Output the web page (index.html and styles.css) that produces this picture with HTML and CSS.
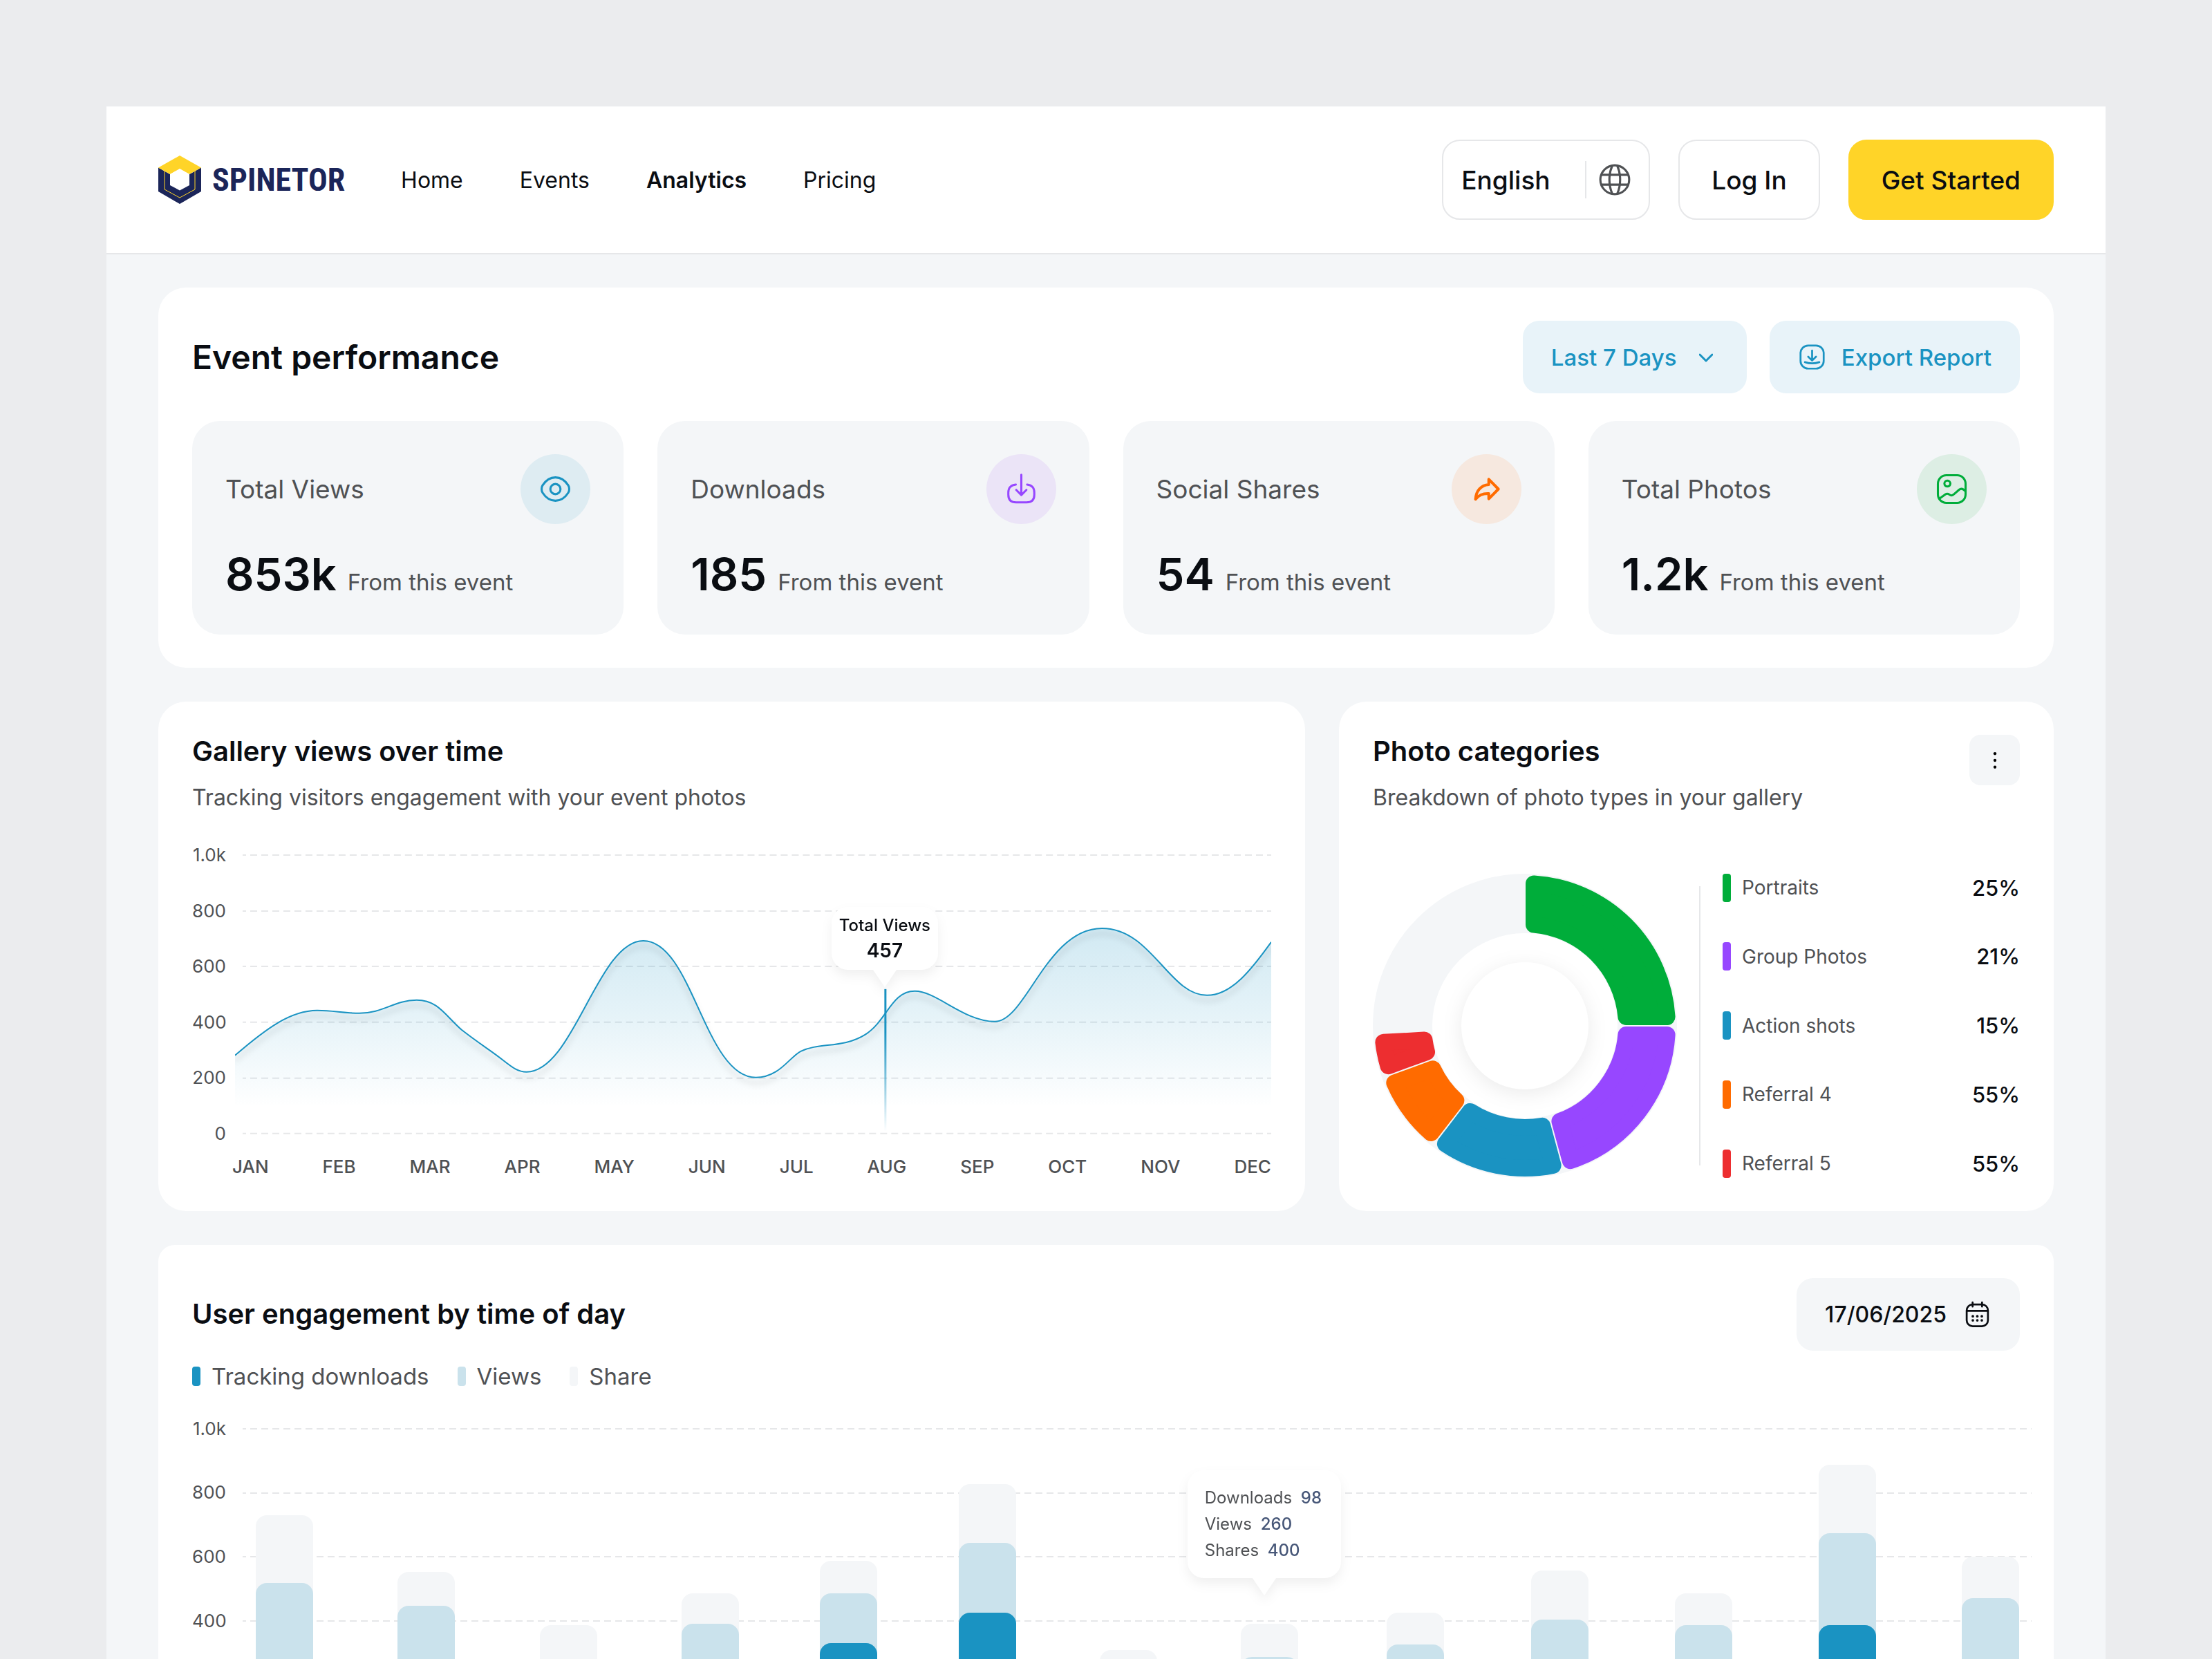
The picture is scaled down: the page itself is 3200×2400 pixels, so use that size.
FILE: index.html
```html
<!DOCTYPE html>
<html lang="en">
<head>
    <meta charset="UTF-8">
    <meta name="viewport" content="width=device-width, initial-scale=1.0">
    <title>Spinetor - Analytics</title>
    <link rel="stylesheet" href="styles.css">
</head>
<body>
    <div class="page">
        <header class="header">
            <a class="logo" href="#">
                <svg class="logo-mark" viewBox="0 0 62 70">
                    <path d="M0 17.5 31 35 62 17.5V52L31 70 0 52Z" fill="#1b2559"/>
                    <path d="M9 22V49L31 61 53 49V22" fill="none" stroke="#ffd428"/>
                    <path d="M31 0 62 17.5 45 27 31 19 17 27 0 17.5Z" fill="#ffd428"/>
                    <path d="M31 19.500 45 27V43L31 50.500 17 43V27Z" fill="#fff"/>
                </svg>
                <span class="logo-text">SPINETOR</span>
            </a>
            <nav class="nav">
                <a href="#">Home</a>
                <a href="#">Events</a>
                <a class="active" href="#">Analytics</a>
                <a href="#">Pricing</a>
            </nav>
            <div class="header-actions">
                <label class="language">
                    <select aria-label="Language">
                        <option>English</option>
                    </select>
                    <svg class="icon-globe" viewBox="0 0 24 24">
                        <circle cx="12" cy="12" r="10"/>
                        <path d="M10.300 2.200C7.600 8 7.600 16 10.300 21.800M13.700 2.200C16.400 8 16.400 16 13.700 21.800M2.600 8.600H21.400M2.600 15.400H21.400"/>
                    </svg>
                </label>
                <button class="btn">Log In</button>
                <button class="btn btn-primary">Get Started</button>
            </div>
        </header>

        <main class="content">
            <section class="card">
                <div class="card-head">
                    <h1>Event performance</h1>
                    <div class="tools">
                        <label class="period">
                            <select aria-label="Period">
                                <option>Last 7 Days</option>
                            </select>
                            <svg class="icon-chevron" viewBox="0 0 20 20"><path d="M1 6 10 15 19 6"/></svg>
                        </label>
                        <button class="btn-soft">
                            <svg class="icon-small" viewBox="0 0 24 24">
                                <rect x="2.200" y="2.200" width="19.600" height="19.600" rx="6.500"/>
                                <path d="M12 6.500V14.800M8.700 11.700 12 15 15.300 11.700M5.900 16.300C9.800 17.700 14.200 17.700 18.100 16.300"/>
                            </svg>
                            Export Report
                        </button>
                    </div>
                </div>
                <div class="stats">
                    <div class="stat">
                        <div class="stat-head">
                            <h2>Total Views</h2>
                            <span class="badge badge-blue">
                                <svg viewBox="0 0 24 24">
                                    <circle cx="12" cy="12" r="3.600"/>
                                    <path d="M12 20.270c3.530 0 6.820-2.080 9.110-5.680.9-1.410.9-3.780 0-5.190-2.290-3.600-5.580-5.680-9.110-5.680-3.530 0-6.820 2.080-9.110 5.680-.9 1.410-.9 3.780 0 5.190 2.290 3.600 5.580 5.680 9.110 5.680Z"/>
                                </svg>
                            </span>
                        </div>
                        <p class="stat-value"><b>853k</b> <span>From this event</span></p>
                    </div>
                    <div class="stat">
                        <div class="stat-head">
                            <h2>Downloads</h2>
                            <span class="badge badge-purple">
                                <svg viewBox="0 0 24 24">
                                    <path d="M8.100 8.800C4.500 9.200 2.800 11 2.800 14.500V16C2.800 19.700 4.700 21.400 8.300 21.400H15.700C19.300 21.400 21.200 19.700 21.200 16V14.500C21.200 11 19.500 9.200 16.100 8.800M12 1.800V16M8.400 12.600 12 16.200 15.600 12.600"/>
                                </svg>
                            </span>
                        </div>
                        <p class="stat-value"><b>185</b> <span>From this event</span></p>
                    </div>
                    <div class="stat">
                        <div class="stat-head">
                            <h2>Social Shares</h2>
                            <span class="badge badge-orange">
                                <svg viewBox="0 0 24 24">
                                    <path d="M13.600 5.100 20.400 12 13.600 18.900V15.200C9.500 15 6.500 16.200 4.200 19.200 4.600 13.300 8 9.200 13.600 8.800Z"/>
                                </svg>
                            </span>
                        </div>
                        <p class="stat-value"><b>54</b> <span>From this event</span></p>
                    </div>
                    <div class="stat">
                        <div class="stat-head">
                            <h2>Total Photos</h2>
                            <span class="badge badge-green">
                                <svg viewBox="0 0 24 24">
                                    <rect x="2.200" y="2.200" width="19.600" height="19.600" rx="6"/>
                                    <circle cx="8.900" cy="8.100" r="2.100"/>
                                    <path d="M3.500 18.600 7.600 15.700C9.200 14.600 9.900 15.700 11 16.300 12 16.900 12.800 16.300 13.600 15.600L17.200 12.500C18.800 11.200 20.200 11.900 21.600 13.500"/>
                                </svg>
                            </span>
                        </div>
                        <p class="stat-value"><b>1.2k</b> <span>From this event</span></p>
                    </div>
                </div>
            </section>

            <div class="row">
                <section class="card">
                    <h2 class="card-title">Gallery views over time</h2>
                    <p class="card-sub">Tracking visitors engagement with your event photos</p>
                    <div class="plot plot-line">
                        <div class="y-axis">
                            <span>1.0k</span><span>800</span><span>600</span><span>400</span><span>200</span><span>0</span>
                        </div>
                        <div class="canvas">
                            <svg viewBox="0 -16 1500 435">
                                <defs>
                                    <linearGradient id="area" gradientUnits="userSpaceOnUse" x1="0" y1="106" x2="0" y2="365">
                                        <stop offset="0" stop-color="#1a93c2" stop-opacity=".2"/>
                                        <stop offset=".5" stop-color="#1a93c2" stop-opacity=".11"/>
                                        <stop offset="1" stop-color="#1a93c2" stop-opacity="0"/>
                                    </linearGradient>
                                    <linearGradient id="marker" x1="0" y1="0" x2="0" y2="1">
                                        <stop offset=".3" stop-color="#1a93c2"/>
                                        <stop offset="1" stop-color="#1a93c2" stop-opacity="0"/>
                                    </linearGradient>
                                </defs>
                                <path class="grid-line" d="M11 0H1500M11 81H1500M11 161H1500M11 242H1500M11 323H1500M11 403H1500"/>
                                <path fill="url(#area)" d="M0 290C44 252 80 225 119 225C143 225 156 229 180 229C215 229 230 210 263 210C294 210 304 232 328 253C352 272 372 284 388 297C402 308 410 314 422 314C490 314 525 124 591 124C662 124 680 322 754 322C788 322 803 292 819 284C846 271 880 280 912 260C944 240 950 197 984 197C1016 197 1055 241 1100 241C1145 241 1175 106 1255 106C1327 106 1352 203 1407 203C1443 203 1472 165 1500 126V365H0Z"/>
                                <path class="curve" d="M0 290C44 252 80 225 119 225C143 225 156 229 180 229C215 229 230 210 263 210C294 210 304 232 328 253C352 272 372 284 388 297C402 308 410 314 422 314C490 314 525 124 591 124C662 124 680 322 754 322C788 322 803 292 819 284C846 271 880 280 912 260C944 240 950 197 984 197C1016 197 1055 241 1100 241C1145 241 1175 106 1255 106C1327 106 1352 203 1407 203C1443 203 1472 165 1500 126"/>
                                <rect x="940" y="194" width="3" height="206" fill="url(#marker)"/>
                            </svg>
                            <div class="tooltip tooltip-views">
                                <span>Total Views</span>
                                <b>457</b>
                            </div>
                        </div>
                    </div>
                    <div class="months">
                        <span>JAN</span><span>FEB</span><span>MAR</span><span>APR</span><span>MAY</span><span>JUN</span>
                        <span>JUL</span><span>AUG</span><span>SEP</span><span>OCT</span><span>NOV</span><span>DEC</span>
                    </div>
                </section>

                <section class="card card-photos">
                    <div class="photos-head">
                        <div>
                            <h2 class="card-title">Photo categories</h2>
                            <p class="card-sub">Breakdown of photo types in your gallery</p>
                        </div>
                        <button class="btn-more" aria-label="More">
                            <svg viewBox="0 0 24 24"><circle cx="12" cy="3" r="2"/><circle cx="12" cy="12" r="2"/><circle cx="12" cy="21" r="2"/></svg>
                        </button>
                    </div>
                    <div class="photos-body">
                        <svg class="donut" viewBox="0 0 440 440">
                            <circle cx="220" cy="220" r="177" fill="none" stroke="#f4f6f8" stroke-width="86"/>
                            <circle class="donut-hole" cx="220" cy="220" r="92"/>
                            <path class="slice green" d="M233 14.400A206 206 0 0 1 425.600 207L366.400 207A147 147 0 0 0 233 73.600Z"/>
                            <path class="slice purple" d="M425.600 233A206 206 0 0 1 285.800 415.200L270.400 358.100A147 147 0 0 0 366.400 233Z"/>
                            <path class="slice blue" d="M260.600 421.900A206 206 0 0 1 104.900 390.800L140.900 343.900A147 147 0 0 0 245.300 364.800Z"/>
                            <path class="slice orange" d="M84.200 375A206 206 0 0 1 31.300 302.500L86.800 282.300A147 147 0 0 0 120.400 328.100Z"/>
                            <path class="slice red" d="M22.400 278.100A206 206 0 0 1 15.400 243.800L74.500 240.600A147 147 0 0 0 78 257.900Z"/>
                        </svg>
                        <div class="divider"></div>
                        <ul class="categories">
                            <li><i class="green"></i><span>Portraits</span><b>25%</b></li>
                            <li><i class="purple"></i><span>Group Photos</span><b>21%</b></li>
                            <li><i class="blue"></i><span>Action shots</span><b>15%</b></li>
                            <li><i class="orange"></i><span>Referral 4</span><b>55%</b></li>
                            <li><i class="red"></i><span>Referral 5</span><b>55%</b></li>
                        </ul>
                    </div>
                </section>
            </div>

            <section class="card card-engagement">
                <div class="card-head">
                    <h2 class="card-title">User engagement by time of day</h2>
                    <button class="btn-date">
                        17/06/2025
                        <svg class="icon-small" viewBox="0 0 24 24">
                            <rect x="3" y="3.600" width="18" height="18.400" rx="5"/>
                            <path d="M8 1.800V5.400M16 1.800V5.400M3.400 9H20.600"/>
                            <path class="dots" d="M8.200 13.600h.01M12 13.600h.01M15.800 13.600h.01M8.200 17h.01M12 17h.01M15.800 17h.01"/>
                        </svg>
                    </button>
                </div>
                <ul class="legend">
                    <li><i class="blue"></i>Tracking downloads</li>
                    <li><i class="light"></i>Views</li>
                    <li><i class="grey"></i>Share</li>
                </ul>
                <div class="plot plot-bars">
                    <div class="y-axis">
                        <span>1.0k</span><span>800</span><span>600</span><span>400</span>
                    </div>
                    <div class="canvas">
                        <svg viewBox="0 -16 2588 349">
                            <path class="grid-line" d="M0 0H2588M0 93H2588M0 185H2588M0 278H2588"/>
                            <g class="bar-share">
                                <rect x="19" y="125" width="83" height="338" rx="16"/>
                                <rect x="224" y="207" width="83" height="256" rx="16"/>
                                <rect x="430" y="284" width="83" height="179" rx="16"/>
                                <rect x="635" y="238" width="83" height="225" rx="16"/>
                                <rect x="835" y="191" width="83" height="272" rx="16"/>
                                <rect x="1036" y="80" width="83" height="383" rx="16"/>
                                <rect x="1240" y="320" width="83" height="143" rx="16"/>
                                <rect x="1444" y="282" width="83" height="181" rx="16"/>
                                <rect x="1655" y="266" width="83" height="197" rx="16"/>
                                <rect x="1864" y="205" width="83" height="258" rx="16"/>
                                <rect x="2072" y="238" width="83" height="225" rx="16"/>
                                <rect x="2280" y="52" width="83" height="411" rx="16"/>
                                <rect x="2487" y="185" width="83" height="278" rx="16"/>
                            </g>
                            <g class="bar-views">
                                <rect x="19" y="223" width="83" height="240" rx="16"/>
                                <rect x="224" y="256" width="83" height="207" rx="16"/>
                                <rect x="635" y="282" width="83" height="181" rx="16"/>
                                <rect x="835" y="238" width="83" height="225" rx="16"/>
                                <rect x="1036" y="165" width="83" height="298" rx="16"/>
                                <rect x="1444" y="330" width="83" height="133" rx="16"/>
                                <rect x="1655" y="312" width="83" height="151" rx="16"/>
                                <rect x="1864" y="276" width="83" height="187" rx="16"/>
                                <rect x="2072" y="284" width="83" height="179" rx="16"/>
                                <rect x="2280" y="151" width="83" height="312" rx="16"/>
                                <rect x="2487" y="245" width="83" height="218" rx="16"/>
                            </g>
                            <g class="bar-downloads">
                                <rect x="835" y="310" width="83" height="153" rx="16"/>
                                <rect x="1036" y="266" width="83" height="197" rx="16"/>
                                <rect x="2280" y="284" width="83" height="179" rx="16"/>
                            </g>
                        </svg>
                        <div class="tooltip tooltip-bars">
                            <p>Downloads <b>98</b></p>
                            <p>Views <b>260</b></p>
                            <p>Shares <b>400</b></p>
                        </div>
                    </div>
                </div>
            </section>
        </main>
    </div>
</body>
</html>
```
FILE: styles.css
```css
* {
    box-sizing: border-box;
    margin: 0;
    padding: 0;
}

body {
    height: 100vh;
    overflow: hidden;
    padding: 154px 154px 0;
    background: #ebecee;
    font-family: Inter, "Liberation Sans", sans-serif;
    font-size: 32px;
    color: #0a0d12;
}

button,
select {
    border: 0;
    background: none;
    font: inherit;
    color: inherit;
    cursor: pointer;
}

select {
    appearance: none;
    outline: 0;
}

a {
    color: inherit;
    text-decoration: none;
}

ul {
    list-style: none;
}

svg {
    display: block;
    flex: none;
}

.page {
    background: #f4f6f8;
}

/* header */
.header {
    display: flex;
    align-items: center;
    padding: 48px 75px;
    background: #fff;
    border-bottom: 2px solid #e6e7e9;
}

.logo {
    display: flex;
    align-items: center;
    gap: 16px;
    color: #1b2559;
}

.logo-mark {
    width: 62px;
    height: 70px;
}

.logo-text {
    font-family: "Liberation Sans Narrow", "Roboto Condensed", "DejaVu Sans Condensed", sans-serif;
    font-size: 46px;
    font-weight: 700;
}

.nav {
    display: flex;
    gap: 82px;
    margin-left: 81px;
}

.nav .active {
    font-weight: 600;
}

.header-actions {
    display: flex;
    gap: 41px;
    margin-left: auto;
    font-size: 37px;
    font-weight: 500;
}

.btn,
.language {
    height: 116px;
    padding: 0 46px;
    border: 2px solid #e6e7e9;
    border-radius: 26px;
}

.btn-primary {
    background: #ffd428;
    border-color: #ffd428;
}

.language {
    display: flex;
    align-items: center;
    padding: 0 24px 0 26px;
}

.language select {
    width: 181px;
    height: 54px;
    border-right: 2px solid #e6e7e9;
}

.icon-globe {
    width: 50px;
    height: 50px;
    margin-left: 16px;
    fill: none;
    stroke: #4f5154;
    stroke-width: 1.500;
}

/* cards */
.content {
    display: flex;
    flex-direction: column;
    gap: 49px;
    padding: 48px 75px 0;
}

.card {
    padding: 48px 49px;
    background: #fff;
    border-radius: 40px;
}

.card-head {
    display: flex;
    align-items: center;
    justify-content: space-between;
}

h1 {
    font-size: 48px;
    font-weight: 600;
}

.card-title {
    font-size: 40px;
    font-weight: 600;
    line-height: 48px;
}

.card-sub {
    margin-top: 23px;
    line-height: 40px;
    color: #4f5154;
}

.tools {
    display: flex;
    gap: 33px;
    font-size: 33px;
}

.period,
.btn-soft,
.btn-date {
    display: flex;
    align-items: center;
    height: 105px;
    padding: 0 41px;
    border-radius: 24px;
    background: #e8f3f9;
    color: #1a93c2;
    font-weight: 500;
}

.period {
    gap: 32px;
    padding-right: 49px;
}

.btn-soft {
    gap: 22px;
}

.btn-date {
    gap: 24px;
    background: #f4f6f8;
    color: #0a0d12;
}

.icon-chevron {
    width: 20px;
    height: 20px;
    fill: none;
    stroke: #1a93c2;
    stroke-width: 3;
    stroke-linecap: round;
    stroke-linejoin: round;
}

.icon-small {
    width: 41px;
    height: 41px;
    fill: none;
    stroke: currentColor;
    stroke-width: 1.600;
    stroke-linecap: round;
    stroke-linejoin: round;
}

.dots {
    stroke-width: 2.200;
}

/* stats */
.stats {
    display: grid;
    grid-template-columns: repeat(4, 1fr);
    gap: 49px;
    margin-top: 40px;
}

.stat {
    padding: 48px;
    background: #f4f6f8;
    border-radius: 40px;
}

.stat-head {
    display: flex;
    align-items: center;
    justify-content: space-between;
}

.stat-head h2 {
    font-size: 37px;
    font-weight: 400;
    color: #4f5154;
}

.badge {
    display: flex;
    align-items: center;
    justify-content: center;
    width: 101px;
    height: 101px;
    border-radius: 50%;
}

.badge svg {
    width: 49px;
    height: 49px;
    fill: none;
    stroke: currentColor;
    stroke-width: 1.500;
    stroke-linecap: round;
    stroke-linejoin: round;
}

.badge-blue {
    background: #deecf2;
    color: #1a93c2;
}

.badge-purple {
    background: #ebe4f7;
    color: #9747ff;
}

.badge-orange {
    background: #f6e8df;
    color: #ff6b00;
}

.badge-orange svg {
    stroke-width: 2;
}

.badge-green {
    background: #ddeee4;
    color: #00ad3a;
}

.stat-value {
    display: flex;
    align-items: baseline;
    gap: 16px;
    margin-top: 34px;
    font-size: 33px;
    line-height: 40px;
    color: #4f5154;
}

.stat-value b {
    font-size: 65px;
    font-weight: 600;
    line-height: 78px;
    color: #0a0d12;
}

/* charts */
.row {
    display: grid;
    grid-template-columns: 1659fr 1034fr;
    gap: 49px;
}

.plot {
    display: flex;
}

.plot-line {
    gap: 13px;
    margin-top: 47px;
}

.plot-bars {
    gap: 24px;
    margin: 40px -17px 0 0;
}

.y-axis {
    display: flex;
    flex-direction: column;
    justify-content: space-between;
    width: 49px;
    font-size: 26px;
    line-height: 32px;
    text-align: right;
    color: #4f5154;
}

.plot-bars .y-axis {
    height: 310px;
}

.canvas {
    position: relative;
    flex: 1;
}

.canvas svg {
    width: 100%;
}

.grid-line {
    stroke: #e6e7e9;
    stroke-width: 2;
    stroke-dasharray: 10 6;
    stroke-dashoffset: 5;
}

.curve {
    fill: none;
    stroke: #1a93c2;
    stroke-width: 2;
    filter: drop-shadow(0 8px 4px rgba(0, 0, 0, 0.2));
}

.months {
    display: flex;
    justify-content: space-between;
    margin-top: 16px;
    padding-left: 58px;
    font-size: 26px;
    font-weight: 500;
    line-height: 32px;
    color: #4f5154;
}

.tooltip {
    position: absolute;
    transform: translateX(-50%);
    background: #fff;
    border-radius: 24px;
    filter: drop-shadow(0 8px 8px rgba(0, 0, 0, 0.06));
}

.tooltip::after {
    content: "";
    position: absolute;
    top: 100%;
    left: 50%;
    margin-left: -17px;
    border: 17px solid transparent;
    border-top: 25px solid #fff;
    border-bottom: 0;
}

.tooltip-views {
    top: 21%;
    left: 62.700%;
    width: 154px;
    padding: 8px 0 9px;
    text-align: center;
    font-size: 24px;
    font-weight: 500;
    line-height: 37px;
}

.tooltip-views span,
.tooltip-views b {
    display: block;
}

.tooltip-views b {
    font-size: 28px;
    font-weight: 600;
}

.tooltip-bars {
    top: 22%;
    left: 57.100%;
    width: 222px;
    padding: 21px 25px;
    font-size: 24px;
    line-height: 38px;
    white-space: nowrap;
    color: #4f5154;
}

.tooltip-bars b {
    margin-left: 6px;
    font-weight: 500;
    color: #475778;
}

/* photo categories */
.card-photos {
    display: flex;
    flex-direction: column;
    justify-content: space-between;
}

.photos-head {
    display: flex;
    align-items: flex-start;
    justify-content: space-between;
}

.btn-more {
    display: flex;
    align-items: center;
    justify-content: center;
    width: 73px;
    height: 73px;
    background: #f4f6f8;
    border-radius: 16px;
}

.btn-more svg {
    width: 26px;
    height: 26px;
}

.photos-body {
    display: flex;
    gap: 32px;
}

.donut {
    width: 440px;
}

.donut-hole {
    fill: #fff;
    filter: drop-shadow(0 6px 14px rgba(0, 0, 0, 0.08));
}

.slice {
    stroke-width: 24;
    stroke-linejoin: round;
}

.green {
    background: #00ad3a;
    fill: #00ad3a;
    stroke: #00ad3a;
}

.purple {
    background: #9747ff;
    fill: #9747ff;
    stroke: #9747ff;
}

.blue {
    background: #1a93c2;
    fill: #1a93c2;
    stroke: #1a93c2;
}

.orange {
    background: #ff6b00;
    fill: #ff6b00;
    stroke: #ff6b00;
}

.red {
    background: #ed2e30;
    fill: #ed2e30;
    stroke: #ed2e30;
}

.light {
    background: #cae2ec;
}

.grey {
    background: #f4f6f8;
}

.divider {
    width: 2px;
    margin: 18px 0;
    background: #e6e7e9;
}

.categories {
    display: flex;
    flex: 1;
    flex-direction: column;
    justify-content: space-between;
}

.categories li {
    display: flex;
    align-items: center;
    height: 41px;
    font-size: 28px;
    color: #4f5154;
}

.categories i {
    width: 12px;
    height: 41px;
    margin-right: 16px;
    border-radius: 4px;
}

.categories b {
    margin-left: auto;
    font-size: 31px;
    font-weight: 500;
    color: #0a0d12;
}

/* engagement */
.card-engagement {
    padding-bottom: 0;
    border-radius: 24px 24px 0 0;
}

.legend {
    display: flex;
    gap: 41px;
    margin-top: 17px;
    font-size: 33px;
    line-height: 40px;
    color: #4f5154;
}

.legend li {
    display: flex;
    align-items: center;
    gap: 16px;
}

.legend i {
    width: 12px;
    height: 28px;
    border-radius: 4px;
}

.bar-share {
    fill: #f4f6f8;
}

.bar-views {
    fill: #cae2ec;
}

.bar-downloads {
    fill: #1a93c2;
}
```
